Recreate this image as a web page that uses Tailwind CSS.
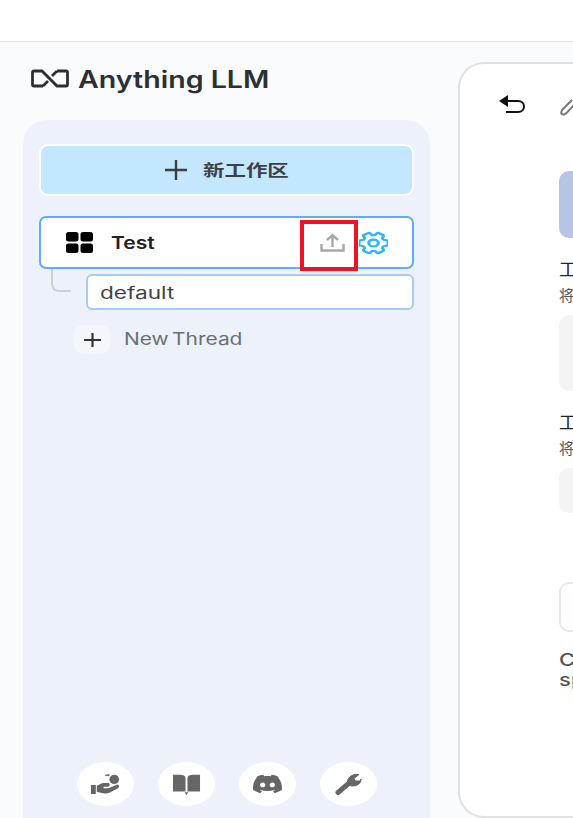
<!DOCTYPE html>
<html lang="zh">
  <head>
    <meta charset="UTF-8" />
    <meta name="viewport" content="width=device-width, initial-scale=1.0" />
    <title>Anything LLM</title>
    <script src="https://cdn.jsdelivr.net/npm/@tailwindcss/browser@4"></script>
  </head>
  <body class="bg-[#f9fbfd] font-['Inter','Noto_Sans_CJK_SC',sans-serif]">
    <div class="relative h-[818px] w-[573px] overflow-hidden">
      <!-- Top bar -->
      <div class="h-[42px] border-b border-[#e6e6e6] bg-white"></div>

      <div class="flex h-[776px] pl-[23px]">
        <!-- Sidebar -->
        <aside class="flex w-[407px] shrink-0 flex-col">
          <div class="flex h-[78px] items-start pl-[8px] pt-[23px]">
            <svg class="mt-[4px] h-[19px] w-[38px]" viewBox="0 0 38 19" fill="none" stroke="#2d3033" stroke-width="2.800">
              <path d="M12 17H3C2 17 1.500 16.500 1.500 15.500V3.500C1.500 2.500 2 2 3 2H11L26 17H35C36 17 36.500 16.500 36.500 15.500V3.500C36.500 2.500 36 2 35 2H26" />
              <path d="M12 17L17 12M21 7L26 2" />
            </svg>
            <span class="ml-[9px] origin-left scale-x-[1.19] text-[24px] leading-[29px] font-semibold whitespace-nowrap text-[#2d3033]">Anything LLM</span>
          </div>

          <div class="flex flex-1 flex-col rounded-t-[24px] bg-[#edf2fa] px-[16px] pt-[24px]">
            <!-- New workspace -->
            <button class="flex h-[52px] items-center rounded-[9px] border-2 border-white bg-[#c2e7ff] pl-[124px] text-[#3c4043]">
              <svg class="h-[20px] w-[22px]" viewBox="0 0 22 20" fill="none" stroke="#3c4043" stroke-width="2.400"><path d="M0 10H22M11 0V20" /></svg>
              <span class="ml-[16px] origin-left scale-x-[1.34] text-[16px] leading-none font-semibold">新工作区</span>
            </button>

            <!-- Workspace row -->
            <div class="mt-[20px] flex h-[53px] items-center rounded-[7px] border-2 border-[#63a9ff] bg-white pl-[25px]">
              <svg class="h-[21px] w-[27px]" viewBox="0 0 27 21" fill="#000">
                <rect x="0" y="0" width="12.500" height="9.500" rx="2.500" />
                <rect x="14.500" y="0" width="12.500" height="9.500" rx="2.500" />
                <rect x="0" y="11.500" width="12.500" height="9.500" rx="2.500" />
                <rect x="14.500" y="11.500" width="12.500" height="9.500" rx="2.500" />
              </svg>
              <span class="mt-[2px] ml-[18px] origin-left scale-x-[1.24] text-[17px] font-semibold text-[#222]">Test</span>
              <svg class="ml-auto h-[19px] w-[25px]" viewBox="0 0 25 19" fill="none" stroke="#a8a8a8" stroke-width="2.400">
                <path d="M1.500 11V17.500H23.500V11M12.500 14V2M7 7L12.500 2L18 7" />
              </svg>
              <svg class="mr-[24px] ml-[14px] h-[22px] w-[29px]" viewBox="3 2.500 18 19" preserveAspectRatio="none" fill="none" stroke="#2db5ff" stroke-width="1.900">
                <g transform="rotate(90 12 12)">
                  <path d="M9.594 3.94c.09-.542.56-.94 1.11-.94h2.593c.55 0 1.02.398 1.11.94l.213 1.281c.063.374.313.686.645.87.074.04.147.083.22.127.325.196.72.257 1.075.124l1.217-.456a1.125 1.125 0 0 1 1.37.49l1.296 2.247a1.125 1.125 0 0 1-.26 1.431l-1.003.827c-.293.241-.438.613-.43.992a7.723 7.723 0 0 1 0 .255c-.008.378.137.75.43.991l1.004.827c.424.35.534.955.26 1.43l-1.298 2.247a1.125 1.125 0 0 1-1.369.491l-1.217-.456c-.355-.133-.75-.072-1.076.124a6.47 6.47 0 0 1-.22.128c-.331.183-.581.495-.644.869l-.213 1.281c-.09.543-.56.94-1.11.94h-2.594c-.55 0-1.019-.398-1.11-.94l-.213-1.281c-.062-.374-.312-.686-.644-.87a6.52 6.52 0 0 1-.22-.127c-.325-.196-.72-.257-1.076-.124l-1.217.456a1.125 1.125 0 0 1-1.369-.49l-1.297-2.247a1.125 1.125 0 0 1 .26-1.431l1.004-.827c.292-.24.437-.613.43-.991a6.932 6.932 0 0 1 0-.255c.007-.38-.138-.751-.43-.992l-1.004-.827a1.125 1.125 0 0 1-.26-1.43l1.297-2.247a1.125 1.125 0 0 1 1.37-.491l1.216.456c.356.133.751.072 1.076-.124.072-.044.146-.086.22-.128.332-.183.582-.495.644-.869l.214-1.28Z" />
                  <path d="M15 12a3 3 0 1 1-6 0 3 3 0 0 1 6 0Z" />
                </g>
              </svg>
            </div>

            <!-- Thread -->
            <div class="flex pl-[12px]">
              <div class="h-[23px] w-[20px] rounded-bl-[8px] border-b-2 border-l-2 border-[#cfcfcf]"></div>
              <div class="mt-[5px] ml-[15px] flex h-[36px] flex-1 items-center rounded-[6px] border-2 border-[#a5ccf7] bg-white pl-[12px]">
                <span class="mt-[3px] origin-left scale-x-[1.33] text-[17px] text-[#444]">default</span>
              </div>
            </div>

            <!-- New thread -->
            <div class="mt-[15px] flex items-center pl-[34px]">
              <div class="flex h-[29px] w-[38px] items-center justify-center rounded-[11px] bg-[#f3f6fb]">
                <svg class="h-[14px] w-[17px]" viewBox="0 0 17 14" fill="none" stroke="#333" stroke-width="2.200"><path d="M0 7H17M8.500 0V14" /></svg>
              </div>
              <span class="ml-[13px] origin-left scale-x-[1.23] text-[17px] [word-spacing:-2px] text-[#6b6f73]">New Thread</span>
            </div>

            <!-- Footer icons -->
            <div class="mt-auto mb-[12px] flex gap-[24px] pl-[38px]">
              <div class="flex h-[44px] w-[57px] items-center justify-center rounded-[50%] bg-white">
                <svg class="h-[22px] w-[31px]" viewBox="0 0 32 24" preserveAspectRatio="none" fill="#666">
                  <circle cx="25" cy="7" r="5" />
                  <path d="M15 2.500C17 1 20 1 21 2L19 3.500C17.500 3 16.500 3.500 15 2.500Z" />
                  <path d="M1 13H6V23H1ZM7 14L13 11H19C21 11 21 15 18 15H14V16.500H19L27 13C30 12.500 31 15 29 16.500L20 21.500C18 22.500 14 22.500 11 21.500L7 20.500Z" />
                </svg>
              </div>
              <div class="flex h-[44px] w-[57px] items-center justify-center rounded-[50%] bg-white">
                <svg class="h-[24px] w-[29px]" viewBox="0 0 30 26" preserveAspectRatio="none" fill="#666">
                  <path d="M1 3H8C11 3 14 4 14 7V21H1ZM29 3H22C19 3 16 4 16 7V21H29ZM13 22H17L15 25Z" />
                </svg>
              </div>
              <div class="flex h-[44px] w-[57px] items-center justify-center rounded-[50%] bg-white">
                <svg class="h-[24px] w-[29px]" viewBox="0 0 24 24" preserveAspectRatio="none" fill="#666">
                  <path d="M20.317 4.3698a19.7913 19.7913 0 00-4.8851-1.5152.0741.0741 0 00-.0785.0371c-.211.3753-.4447.8648-.6083 1.2495-1.8447-.2762-3.68-.2762-5.4868 0-.1636-.3933-.4058-.8742-.6177-1.2495a.077.077 0 00-.0785-.037 19.7363 19.7363 0 00-4.8852 1.515.0699.0699 0 00-.0321.0277C.5334 9.0458-.319 13.5799.0992 18.0578a.0824.0824 0 00.0312.0561c2.0528 1.5076 4.0413 2.4228 5.9929 3.0294a.0777.0777 0 00.0842-.0276c.4616-.6304.8731-1.2952 1.226-1.9942a.076.076 0 00-.0416-.1057c-.6528-.2476-1.2743-.5495-1.8722-.8923a.077.077 0 01-.0076-.1277c.1258-.0943.2517-.1923.3718-.2914a.0743.0743 0 01.0776-.0105c3.9278 1.7933 8.18 1.7933 12.0614 0a.0739.0739 0 01.0785.0095c.1202.099.246.1981.3728.2924a.077.077 0 01-.0066.1276 12.2986 12.2986 0 01-1.873.8914.0766.0766 0 00-.0407.1067c.3604.698.7719 1.3628 1.225 1.9932a.076.076 0 00.0842.0286c1.961-.6067 3.9495-1.5219 6.0023-3.0294a.077.077 0 00.0313-.0552c.5004-5.177-.8382-9.6739-3.5485-13.6604a.061.061 0 00-.0312-.0286zM8.02 15.3312c-1.1825 0-2.1569-1.0857-2.1569-2.419 0-1.3332.9555-2.4189 2.157-2.4189 1.2108 0 2.1757 1.0952 2.1568 2.419 0 1.3332-.9555 2.4189-2.1569 2.4189zm7.9748 0c-1.1825 0-2.1569-1.0857-2.1569-2.419 0-1.3332.9554-2.4189 2.1569-2.4189 1.2108 0 2.1757 1.0952 2.1568 2.419 0 1.3332-.946 2.4189-2.1568 2.4189Z" />
                </svg>
              </div>
              <div class="flex h-[44px] w-[57px] items-center justify-center rounded-[50%] bg-white">
                <svg class="h-[22px] w-[27px]" viewBox="0 0 27 22" fill="none" stroke="#666" stroke-linecap="round">
                  <path d="M3 19.500L13 11" stroke-width="5" />
                  <path d="M13 12C10 6 17 0 24 1.500L19 5.500L20 8L25 8L26 6C26.500 11 20 15 13 12Z" fill="#666" stroke-width="1" />
                </svg>
              </div>
            </div>
          </div>
        </aside>

        <!-- Main card -->
        <main class="mt-[20px] ml-[28px] w-[300px] shrink-0 overflow-hidden rounded-l-[26px] border-2 border-r-0 border-[#dfe1e3] bg-white">
          <div class="flex h-[107px] items-start pt-[31px] pl-[39px]">
            <svg class="h-[19px] w-[26px]" viewBox="0 0 26 19" fill="none" stroke="#111" stroke-width="2">
              <path d="M4 6H19C27 6 27 17 19 17H7" />
              <path d="M0 6L9 0V12Z" fill="#111" stroke="none" />
            </svg>
            <svg class="mt-[3px] ml-[35px] h-[18px] w-[20px] shrink-0" viewBox="0 0 20 18" fill="none" stroke="#777" stroke-width="2">
              <path d="M3 11L12 2M3 11C0 14 1 17 4 16.500C5 16.300 6 15.500 7 14.500L15 6" />
            </svg>
          </div>
          <div class="pl-[99px]">
            <div class="h-[67px] rounded-l-[10px] bg-[#b8c4e6]"></div>
            <h2 class="mt-[20px] h-[24px] text-[18px] leading-[24px] font-normal whitespace-nowrap text-[#222]">工作区名称</h2>
            <p class="mt-[5px] h-[18px] text-[15px] leading-[18px] whitespace-nowrap text-[#555]">将显示在聊天中</p>
            <div class="mt-[10px] h-[76px] rounded-l-[10px] bg-[#f4f4f4]"></div>
            <h2 class="mt-[20px] h-[24px] text-[18px] leading-[24px] font-normal whitespace-nowrap text-[#222]">工作区名称</h2>
            <p class="mt-[5px] h-[18px] text-[15px] leading-[18px] whitespace-nowrap text-[#555]">将显示在聊天中</p>
            <div class="mt-[10px] h-[45px] rounded-l-[10px] bg-[#f4f4f4]"></div>
            <div class="mt-[69px] h-[50px] rounded-l-[10px] border-2 border-r-0 border-[#e3e8f1]"></div>
            <p class="mt-[18px] origin-left scale-x-[1.3] text-[17px] leading-[20px] font-medium whitespace-nowrap text-[#555]">Customize the<br />specific chat</p>
          </div>
        </main>
      </div>

      <!-- Red annotation box -->
      <div class="absolute top-[220px] left-[300px] h-[51px] w-[58px] border-4 border-[#ea1422]"></div>
    </div>
  </body>
</html>
